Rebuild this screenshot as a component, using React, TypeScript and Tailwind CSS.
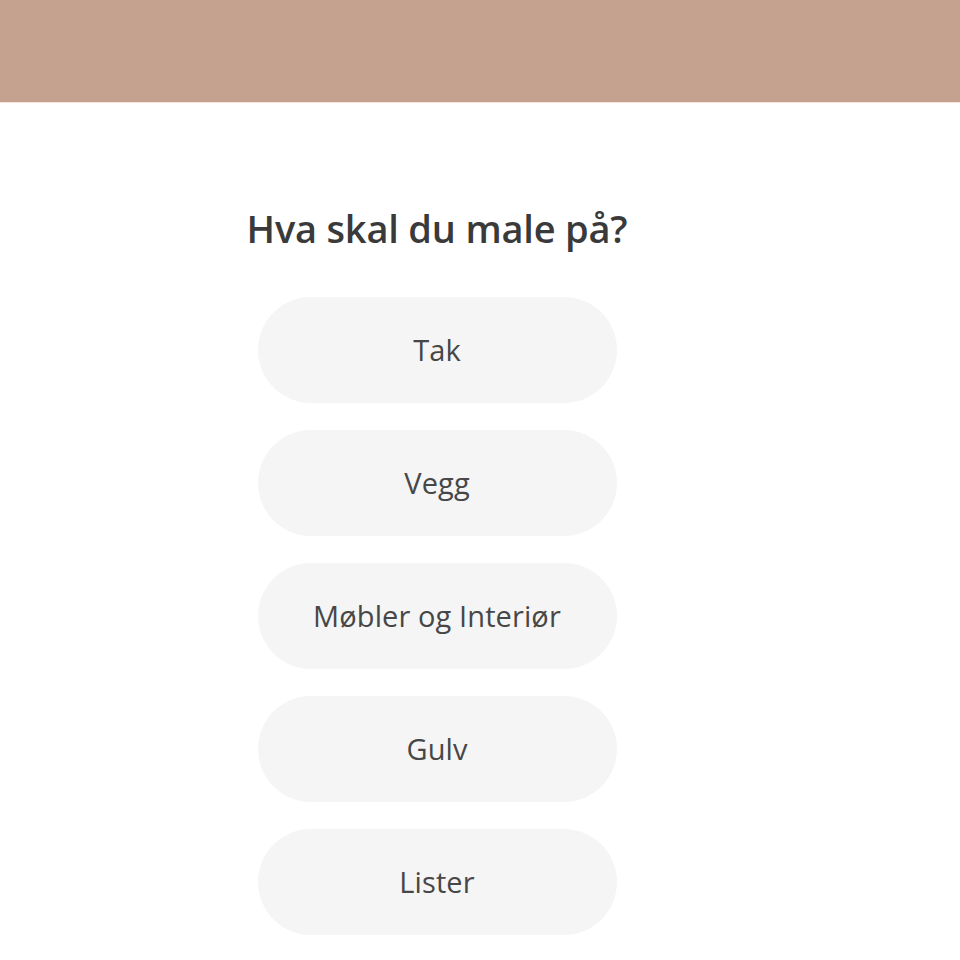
const options = ['Tak', 'Vegg', 'Møbler og Interiør', 'Gulv', 'Lister'];

export default function App() {
  return (
    <div className="min-h-[960px] bg-white font-['Open_Sans',sans-serif]">
      <header className="h-[103px] bg-[#c4a28f] border-b border-[#f3e3dc]" />

      <main className="ml-[227px] w-[420px] flex flex-col items-center pt-[102px]">
        <h1 className="text-[38px] font-semibold leading-[46px] text-[#3a3a3a] tracking-[-0.2px] whitespace-nowrap">
          Hva skal du male på?
        </h1>

        <div className="mt-[46px] flex flex-col gap-[27px]">
          {options.map((opt) => (
            <button
              key={opt}
              className="w-[359px] h-[106px] rounded-full bg-[#f5f5f5] text-[29px] text-[#474747] tracking-[0.1px]"
            >
              {opt}
            </button>
          ))}
        </div>
      </main>
    </div>
  );
}
